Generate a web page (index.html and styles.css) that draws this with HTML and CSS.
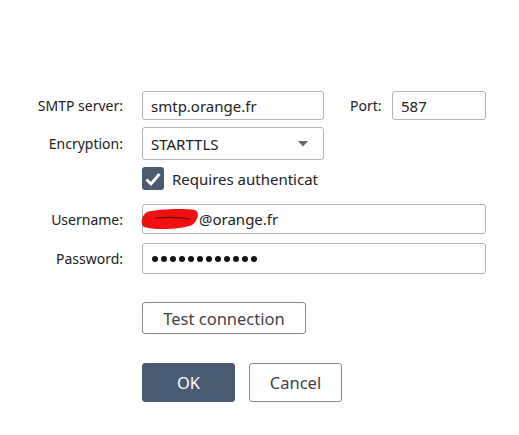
FILE: index.html
```html
<!DOCTYPE html>
<html>
<head>
<meta charset="utf-8">
<link rel="stylesheet" href="styles.css">
</head>
<body>
<div class="dialog">
  <div class="row row-server">
    <label class="lbl">SMTP server:</label>
    <div class="field w181">smtp.orange.fr</div>
    <label class="port-lbl">Port:</label>
    <div class="field w93">587</div>
  </div>
  <div class="row row-enc">
    <label class="lbl">Encryption:</label>
    <div class="field select w181">
      <span>STARTTLS</span>
      <svg class="caret" width="10" height="6" viewBox="0 0 10 6"><path d="M0 0H10L5 5.5Z" fill="#666"/></svg>
    </div>
  </div>
  <div class="row row-check">
    <span class="lbl"></span>
    <span class="checkbox">
      <svg width="16" height="14" viewBox="0 0 16 14"><path d="M1.5 7.5L6 12L14.5 2" fill="none" stroke="#fff" stroke-width="2.8"/></svg>
    </span>
    <span class="check-text">Requires authenticat</span>
  </div>
  <div class="row row-user">
    <label class="lbl">Username:</label>
    <div class="field wide user">
      <span class="redact">
        <svg width="58" height="22" viewBox="0 0 58 22"><path d="M6 4C16 1 42 0 54 2C59 4 57 13 51 17C38 22 12 22 3 19C-1 16 0 8 6 4Z" fill="#f01010"/><path d="M14 10C26 9 38 9 49 11" stroke="#5a1010" stroke-width="1.2" fill="none"/></svg>
      </span><span class="user-text">@orange.fr</span>
    </div>
  </div>
  <div class="row row-pass">
    <label class="lbl">Password:</label>
    <div class="field wide pass">
      <span class="dots"><i></i><i></i><i></i><i></i><i></i><i></i><i></i><i></i><i></i><i></i><i></i><i></i></span>
    </div>
  </div>
  <div class="row row-test">
    <span class="lbl"></span>
    <button class="btn test">Test connection</button>
  </div>
  <div class="row row-actions">
    <span class="lbl"></span>
    <button class="btn primary">OK</button>
    <button class="btn cancel">Cancel</button>
  </div>
</div>
</body>
</html>
```

FILE: styles.css
```css
html, body {
  margin: 0;
  padding: 0;
  background: #fff;
}
body {
  font-family: "Noto Sans", "Open Sans", sans-serif;
  font-size: 14px;
  color: #222;
}
.dialog {
  padding-top: 91px;
  display: flex;
  flex-direction: column;
}
.row {
  display: flex;
  align-items: center;
}
.lbl {
  width: 123px;
  margin-right: 19px;
  text-align: right;
  flex: none;
}
.field {
  box-sizing: border-box;
  border: 1px solid #b4b4b4;
  border-radius: 3px;
  height: 29px;
  padding-left: 8px;
  display: flex;
  align-items: center;
  background: #fff;
  font-size: 15px;
}
.w181 { width: 182px; }
.w93 { width: 94px; }
.wide { width: 344px; }
.port-lbl {
  width: 42px;
  margin-left: 26px;
  flex: none;
}
.row-enc { margin-top: 7px; }
.select {
  height: 33px;
  justify-content: space-between;
  padding-right: 15px;
}
.caret { display: block; }
.row-check { margin-top: 7px; height: 23px; }
.checkbox {
  width: 22px;
  height: 23px;
  box-sizing: border-box;
  background: #4a5a70;
  border-radius: 3px;
  display: flex;
  align-items: center;
  justify-content: center;
  flex: none;
}
.check-text {
  margin-left: 8px;
  width: 152px;
  overflow: hidden;
  white-space: nowrap;
  font-size: 15px;
}
.row-user { margin-top: 14px; }
.user { height: 30px; padding-left: 0; }
.redact {
  display: block;
  margin-left: -2px;
  height: 22px;
}
.redact svg { display: block; }
.user-text { margin-left: 0; }
.row-pass { margin-top: 9px; }
.pass { height: 31px; padding-left: 9px; }
.dots {
  display: flex;
  gap: 3px;
}
.dots i {
  display: block;
  width: 6px;
  height: 6px;
  border-radius: 50%;
  background: #111;
}
.btn {
  font-family: inherit;
  font-size: 16.5px;
  box-sizing: border-box;
  border: 1px solid #8a8a8a;
  border-radius: 3px;
  background: #fff;
  color: #444;
  padding: 0;
  cursor: pointer;
}
.row-test { margin-top: 28px; }
.test {
  width: 164px;
  height: 32px;
}
.row-actions { margin-top: 29px; }
.primary {
  width: 93px;
  height: 39px;
  background: #4a5a70;
  border-color: #4a5a70;
  color: #fff;
}
.cancel {
  width: 93px;
  height: 39px;
  margin-left: 14px;
}
```
